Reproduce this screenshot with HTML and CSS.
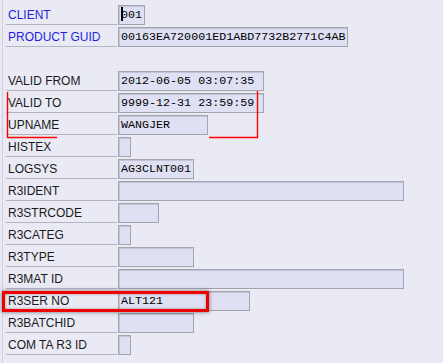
FILE: index.html
```html
<!DOCTYPE html>
<html lang="en">
<head>
    <meta charset="UTF-8">
    <title>Product Detail</title>
    <link rel="stylesheet" href="styles.css">
</head>
<body>
    <div class="screen">
        <div class="form">
            <div class="row">
                <div class="label key">CLIENT</div>
                <div class="field" style="width: 27px;"><span class="caret"></span>001</div>
            </div>
            <div class="row">
                <div class="label key">PRODUCT GUID</div>
                <div class="field" style="width: 230px;">00163EA720001ED1ABD7732B2771C4AB</div>
            </div>
            <div class="row spacer"></div>
            <div class="row">
                <div class="label">VALID FROM</div>
                <div class="field" style="width: 146px;">2012-06-05 03:07:35</div>
            </div>
            <div class="row">
                <div class="label">VALID TO</div>
                <div class="field" style="width: 146px;">9999-12-31 23:59:59</div>
            </div>
            <div class="row">
                <div class="label">UPNAME</div>
                <div class="field" style="width: 90px;">WANGJER</div>
            </div>
            <div class="row">
                <div class="label">HISTEX</div>
                <div class="field" style="width: 13px;"></div>
            </div>
            <div class="row">
                <div class="label">LOGSYS</div>
                <div class="field" style="width: 76px;">AG3CLNT001</div>
            </div>
            <div class="row">
                <div class="label">R3IDENT</div>
                <div class="field" style="width: 286px;"></div>
            </div>
            <div class="row">
                <div class="label">R3STRCODE</div>
                <div class="field" style="width: 41px;"></div>
            </div>
            <div class="row">
                <div class="label">R3CATEG</div>
                <div class="field" style="width: 13px;"></div>
            </div>
            <div class="row">
                <div class="label">R3TYPE</div>
                <div class="field" style="width: 76px;"></div>
            </div>
            <div class="row">
                <div class="label">R3MAT ID</div>
                <div class="field" style="width: 286px;"></div>
            </div>
            <div class="row">
                <div class="label">R3SER NO</div>
                <div class="field" style="width: 132px;">ALT121</div>
            </div>
            <div class="row">
                <div class="label">R3BATCHID</div>
                <div class="field" style="width: 76px;"></div>
            </div>
            <div class="row">
                <div class="label">COM TA R3 ID</div>
                <div class="field" style="width: 13px;"></div>
            </div>
        </div>

        <!-- hand-drawn markup over the screen -->
        <svg class="marks" width="443" height="363" viewBox="0 0 443 363">
            <polyline points="7.5,92 7.5,137.5 57,137.5" fill="none" stroke="#ff0000" stroke-width="1.4"/>
            <polyline points="257.5,91 257.5,137.5 209,137.5" fill="none" stroke="#ff0000" stroke-width="1.4"/>
        </svg>
        <div class="highlight"></div>
    </div>
</body>
</html>
```

FILE: styles.css
```css
body {
    margin: 0;
    padding: 0;
    background-color: #eaeaf5;
    font-family: "Liberation Sans", Arial, sans-serif;
    font-size: 12px;
    color: #1a1a1a;
}
.screen {
    position: relative;
    width: 443px;
    height: 363px;
    overflow: hidden;
}
.form {
    margin-left: 2px;
    padding-top: 3px;
    padding-left: 3px;
    border-left: 1px solid #d0d0dc;
    height: 360px;
}
.row {
    display: flex;
    height: 22px;
}
.label {
    width: 109px;
    padding-left: 2px;
    height: 21px;
    line-height: 24px;
    border-bottom: 1px solid #b4b4c2;
    white-space: nowrap;
}
.label.key {
    color: #1f1fe0;
}
.spacer .label {
    border-bottom: none;
}
.field {
    box-sizing: border-box;
    margin-left: 1px;
    margin-top: 2px;
    height: 20px;
    padding-left: 2px;
    background-color: #e0e0f4;
    border: 1px solid #a4a4ae;
    box-shadow: inset 1px 1px 0 #c4c4d4;
    font-family: "Liberation Mono", "Courier New", monospace;
    font-size: 11.7px;
    line-height: 18px;
    color: #000;
    white-space: nowrap;
    overflow: hidden;
}
.caret {
    display: inline-block;
    width: 2px;
    height: 14px;
    margin-right: -2px;
    vertical-align: -3px;
    background-color: #000;
}
.marks {
    position: absolute;
    left: 0;
    top: 0;
}
.highlight {
    position: absolute;
    left: 2px;
    top: 291px;
    width: 201px;
    height: 15px;
    border: 3px solid #f00000;
    box-shadow: 0 0 4px rgba(0, 0, 0, 0.55), inset 0 0 3px rgba(0, 0, 0, 0.35);
}
```
